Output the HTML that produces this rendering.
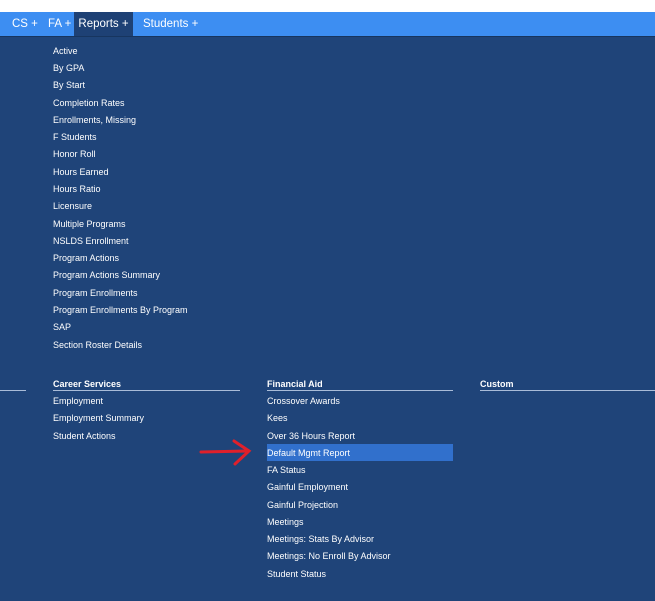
<!DOCTYPE html><html><head><style>
body{margin:0;width:655px;height:601px;background:#1f4479;font-family:"Liberation Sans",sans-serif;position:relative;overflow:hidden;color:#fff}
.top{position:absolute;left:0;top:0;width:655px;height:12px;background:#fff}
.nav{position:absolute;left:0;top:12px;width:655px;height:24px;background:#3d8ef2;border-bottom:1px solid #17355f}
.nav span{position:absolute;top:0;line-height:24px;font-size:11.5px;color:#fff}
.it{position:absolute;font-size:9px;line-height:17px;white-space:nowrap}
.h{position:absolute;font-size:9px;font-weight:bold;top:377px;line-height:14px}
.ln{position:absolute;top:390px;height:1px;background:#a9bcd8}
</style></head><body>
<div class="top"></div>
<div class="nav">
<span style="left:12px">CS +</span>
<span style="left:48px">FA +</span>
<span style="left:74px;width:59px;background:#1e4175;text-align:center">Reports +</span>
<span style="left:143px">Students +</span>
</div>
<div class="it" style="left:53px;top:43px">Active</div>
<div class="it" style="left:53px;top:60px">By GPA</div>
<div class="it" style="left:53px;top:77px">By Start</div>
<div class="it" style="left:53px;top:95px">Completion Rates</div>
<div class="it" style="left:53px;top:112px">Enrollments, Missing</div>
<div class="it" style="left:53px;top:129px">F Students</div>
<div class="it" style="left:53px;top:146px">Honor Roll</div>
<div class="it" style="left:53px;top:164px">Hours Earned</div>
<div class="it" style="left:53px;top:181px">Hours Ratio</div>
<div class="it" style="left:53px;top:198px">Licensure</div>
<div class="it" style="left:53px;top:216px">Multiple Programs</div>
<div class="it" style="left:53px;top:233px">NSLDS Enrollment</div>
<div class="it" style="left:53px;top:250px">Program Actions</div>
<div class="it" style="left:53px;top:267px">Program Actions Summary</div>
<div class="it" style="left:53px;top:285px">Program Enrollments</div>
<div class="it" style="left:53px;top:302px">Program Enrollments By Program</div>
<div class="it" style="left:53px;top:319px">SAP</div>
<div class="it" style="left:53px;top:337px">Section Roster Details</div>
<div class="ln" style="left:0;width:26px"></div>
<div class="h" style="left:53px">Career Services</div><div class="ln" style="left:53px;width:187px"></div>
<div class="h" style="left:267px">Financial Aid</div><div class="ln" style="left:267px;width:186px"></div>
<div class="h" style="left:480px">Custom</div><div class="ln" style="left:480px;width:175px"></div>
<div class="it" style="left:53px;top:393px">Employment</div>
<div class="it" style="left:53px;top:410px">Employment Summary</div>
<div class="it" style="left:53px;top:428px">Student Actions</div>
<div style="position:absolute;left:267px;top:444px;width:186px;height:17px;background:#3170cc"></div>
<div class="it" style="left:267px;top:393px">Crossover Awards</div>
<div class="it" style="left:267px;top:410px">Kees</div>
<div class="it" style="left:267px;top:428px">Over 36 Hours Report</div>
<div class="it" style="left:267px;top:445px">Default Mgmt Report</div>
<div class="it" style="left:267px;top:462px">FA Status</div>
<div class="it" style="left:267px;top:479px">Gainful Employment</div>
<div class="it" style="left:267px;top:497px">Gainful Projection</div>
<div class="it" style="left:267px;top:514px">Meetings</div>
<div class="it" style="left:267px;top:531px">Meetings: Stats By Advisor</div>
<div class="it" style="left:267px;top:548px">Meetings: No Enroll By Advisor</div>
<div class="it" style="left:267px;top:566px">Student Status</div>
<svg style="position:absolute;left:198px;top:438px" width="56" height="30"><path d="M3 14 L50 13 M36 3 L51 13 L37 26" stroke="#e0202a" stroke-width="3" fill="none" stroke-linecap="round"/></svg>
</body></html>
